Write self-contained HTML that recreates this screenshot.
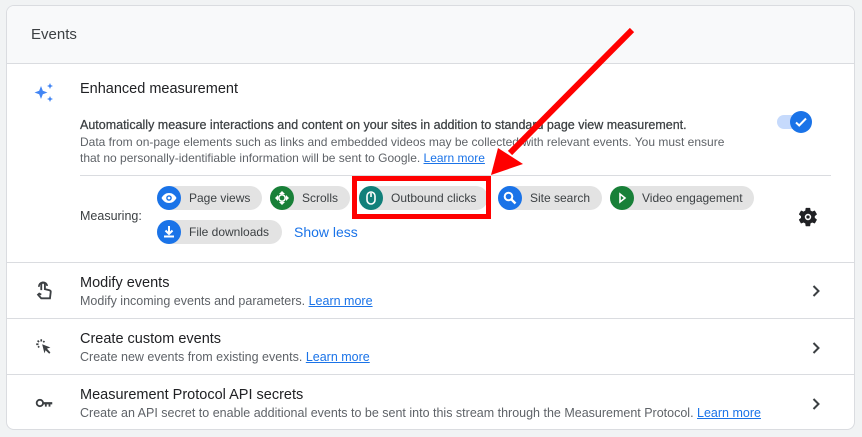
<!DOCTYPE html>
<html><head><meta charset="utf-8"><style>
body{margin:0;width:862px;height:437px;background:#f1f3f4;font-family:"Liberation Sans",Arial,sans-serif;position:relative;overflow:hidden;color:#3c4043}
.card{position:absolute;left:6px;top:5px;width:849px;height:425px;background:#fff;border:1px solid #dadce0;border-radius:8px;box-sizing:border-box;overflow:hidden}
.hdr{position:absolute;left:0;top:0;right:0;height:57px;background:#f8f9fa;border-bottom:1px solid #dadce0}
.a{position:absolute;white-space:nowrap}
.chip{position:absolute;height:24px;background:#e3e3e3;border-radius:12px;font-size:12px;line-height:24px;color:#3c4043}
.chip .ic{position:absolute;left:0;top:0;width:24px;height:24px;border-radius:50%}
.chip span{position:absolute;left:32px}
.line{position:absolute;left:0;right:0;height:1px;background:#dadce0}
.t{font-size:14.5px;color:#202124}
.s{font-size:12.5px;color:#5f6368}
a{color:#1a73e8;text-decoration:underline}
</style></head><body>
<div class="card">
<div class="hdr"></div>
<div class="a" style="left:24px;top:20px;font-size:15px;color:#3c4043">Events</div>
<svg class="a" style="left:26px;top:76px" width="24" height="24" viewBox="0 0 24 24"><path fill="#4285f4" d="M8 4l1.8 4.7L14.5 10.5 9.8 12.3 8 17 6.2 12.3 1.5 10.5 6.2 8.7z M17 1l.9 2.1L20 4l-2.1.9L17 7l-.9-2.1L14 4l2.1-.9z M17 14l.9 2.1L20 17l-2.1.9L17 20l-.9-2.1L14 17l2.1-.9z"/></svg>
<div class="a t" style="left:73px;top:75px;font-weight:500">Enhanced measurement</div>
<div class="a" style="left:73px;top:111px;font-size:12px;line-height:16.5px;color:#3c4043"><span style="font-size:12.5px;color:#3c4043;-webkit-text-stroke:0.25px #3c4043">Automatically measure interactions and content on your sites in addition to standard page view measurement.</span><br><span style="color:#5f6368">Data from on-page elements such as links and embedded videos may be collected with relevant events. You must ensure<br>that no personally-identifiable information will be sent to Google. <a>Learn more</a></span></div>
<div class="a" style="left:770px;top:109px;width:30px;height:14px;border-radius:7px;background:#c6dafc"></div>
<div class="a" style="left:783px;top:105px;width:22px;height:22px;border-radius:50%;background:#1a73e8"><svg width="22" height="22" viewBox="0 0 22 22"><path d="M6 11.5l3.2 3L16 7.5" stroke="#fff" stroke-width="2" fill="none"/></svg></div>
<div class="line" style="left:73px;right:23px;top:169px"></div>
<div class="a" style="left:73px;top:203px;font-size:12.5px;color:#3c4043">Measuring:</div>
<div class="chip" style="left:150px;top:180px;width:105px"><div class="ic" style="background:#1a73e8"><svg width="24" height="24" viewBox="0 0 24 24"><path d="M4.5 12c2-3.5 4.5-5 7.5-5s5.5 1.5 7.5 5c-2 3.5-4.5 5-7.5 5s-5.5-1.5-7.5-5z" fill="#fff"/><circle cx="12" cy="12" r="2.8" fill="#1a73e8"/><circle cx="12" cy="12" r="1.4" fill="#fff"/></svg></div><span>Page views</span></div>
<div class="chip" style="left:263px;top:180px;width:80px"><div class="ic" style="background:#188038"><svg width="24" height="24" viewBox="0 0 24 24"><path d="M12 5l3 3h-6zM12 19l3-3H9zM5 12l3-3v6zM19 12l-3-3v6z" fill="#fff"/><circle cx="12" cy="12" r="3.2" fill="none" stroke="#fff" stroke-width="1.6"/></svg></div><span>Scrolls</span></div>
<div class="chip" style="left:352px;top:180px;width:129px"><div class="ic" style="background:#12807a"><svg width="24" height="24" viewBox="0 0 24 24"><rect x="8" y="6" width="8" height="12" rx="4" fill="none" stroke="#fff" stroke-width="1.6"/><path d="M12 7v4" stroke="#fff" stroke-width="1.6"/></svg></div><span>Outbound clicks</span></div>
<div class="chip" style="left:491px;top:180px;width:104px"><div class="ic" style="background:#1a73e8"><svg width="24" height="24" viewBox="0 0 24 24"><circle cx="10.5" cy="10.5" r="3.8" fill="none" stroke="#fff" stroke-width="2"/><path d="M13.5 13.5l4 4" stroke="#fff" stroke-width="2.4"/></svg></div><span>Site search</span></div>
<div class="chip" style="left:603px;top:180px;width:144px"><div class="ic" style="background:#188038"><svg width="24" height="24" viewBox="0 0 24 24"><path d="M10 8l5 4-5 4z" fill="none" stroke="#fff" stroke-width="1.6"/></svg></div><span>Video engagement</span></div>
<div class="chip" style="left:150px;top:214px;width:125px"><div class="ic" style="background:#1a73e8"><svg width="24" height="24" viewBox="0 0 24 24"><path d="M12 6v8M8.5 10.5L12 14l3.5-3.5M7 16.5h10" stroke="#fff" stroke-width="2" fill="none"/></svg></div><span>File downloads</span></div>
<div class="a" style="left:287px;top:218px;font-size:14px;color:#1a73e8">Show less</div>
<svg class="a" style="left:790px;top:200px" width="22" height="22" viewBox="0 0 24 24"><path fill="#202124" d="M19.4 13c.04-.33.06-.66.06-1s-.02-.67-.06-1l2.1-1.650c.2-.15.25-.42.12-.64l-2-3.46c-.12-.22-.39-.3-.61-.22l-2.49 1a7.3 7.3 0 0 0-1.730-1l-.38-2.65A.49.49 0 0 0 13.9 2h-4c-.25 0-.46.18-.49.42l-.38 2.65c-.61.25-1.170.59-1.73 1l-2.49-1c-.22-.08-.49 0-.61.22l-2 3.46c-.13.22-.07.49.12.64L4.4 11c-.04.33-.07.67-.07 1s.03.67.07 1l-2.1 1.65c-.2.15-.25.42-.12.64l2 3.46c.12.22.39.3.61.22l2.49-1c.52.4 1.1.74 1.73 1l.38 2.65c.03.24.24.42.49.42h4c.25 0 .46-.18.49-.42l.38-2.65c.61-.25 1.17-.59 1.73-1l2.49 1c.22.08.49 0 .61-.22l2-3.46c.12-.22.07-.49-.12-.64zM12 15.5A3.5 3.5 0 1 1 12 8.5a3.5 3.5 0 0 1 0 7zM12 10.2a1.8 1.8 0 1 0 0 3.6 1.8 1.8 0 0 0 0-3.6z" fill-rule="evenodd"/></svg>

<div class="line" style="top:256px"></div>
<svg class="a" style="left:26px;top:274px" width="22" height="22" viewBox="0 0 24 24"><path d="M9 11V5a2 2 0 0 1 4 0v5l5 1.2c1 .3 1.5 1.2 1.3 2.2L18.5 20H9l-3.5-4 1.3-1.2L9 16" fill="none" stroke="#3c4043" stroke-width="2"/><path d="M6.5 7.5a4.5 4.5 0 0 1 9-1" fill="none" stroke="#3c4043" stroke-width="1.8"/></svg>
<div class="a t" style="left:73px;top:269px">Modify events</div>
<div class="a s" style="left:73px;top:288px">Modify incoming events and parameters. <a>Learn more</a></div>
<svg class="a" style="left:802px;top:278px" width="14" height="14" viewBox="0 0 14 14"><path d="M4.5 2l5 5-5 5" stroke="#3c4043" stroke-width="2" fill="none"/></svg>

<div class="line" style="top:312px"></div>
<svg class="a" style="left:26px;top:330px" width="22" height="22" viewBox="0 0 24 24"><path d="M10 9l9 3.5-3.8 1.3L19 18l-1.3 1.3-4-3.8L12.5 19z" fill="#3c4043"/><path d="M9 3.5v2.5M3.5 9H6M5 5l1.6 1.6M12.5 5.5l-1.3 1.3M5.5 12.5l1.3-1.3" stroke="#3c4043" stroke-width="1.8"/></svg>
<div class="a t" style="left:73px;top:325px">Create custom events</div>
<div class="a s" style="left:73px;top:344px">Create new events from existing events. <a>Learn more</a></div>
<svg class="a" style="left:802px;top:335px" width="14" height="14" viewBox="0 0 14 14"><path d="M4.5 2l5 5-5 5" stroke="#3c4043" stroke-width="2" fill="none"/></svg>

<div class="line" style="top:368px"></div>
<svg class="a" style="left:26px;top:386px" width="22" height="22" viewBox="0 0 24 24"><circle cx="7.5" cy="12" r="3.5" fill="none" stroke="#3c4043" stroke-width="2"/><path d="M11 11h10v2.5h-2v2.5h-2v-2.5h-2v2.5h-2v-2.5h-2z" fill="#3c4043"/></svg>
<div class="a t" style="left:73px;top:381px">Measurement Protocol API secrets</div>
<div class="a s" style="left:73px;top:400px">Create an API secret to enable additional events to be sent into this stream through the Measurement Protocol. <a>Learn more</a></div>
<svg class="a" style="left:802px;top:391px" width="14" height="14" viewBox="0 0 14 14"><path d="M4.5 2l5 5-5 5" stroke="#3c4043" stroke-width="2" fill="none"/></svg>
</div>
<svg style="position:absolute;left:0;top:0" width="862" height="437">
<rect x="354.5" y="178.5" width="134" height="38" fill="none" stroke="#f00" stroke-width="5"/>
<line x1="632" y1="30" x2="510" y2="153" stroke="#f00" stroke-width="6"/>
<polygon points="491,175 498,148 523,164" fill="#f00"/>
</svg>
</body></html>
